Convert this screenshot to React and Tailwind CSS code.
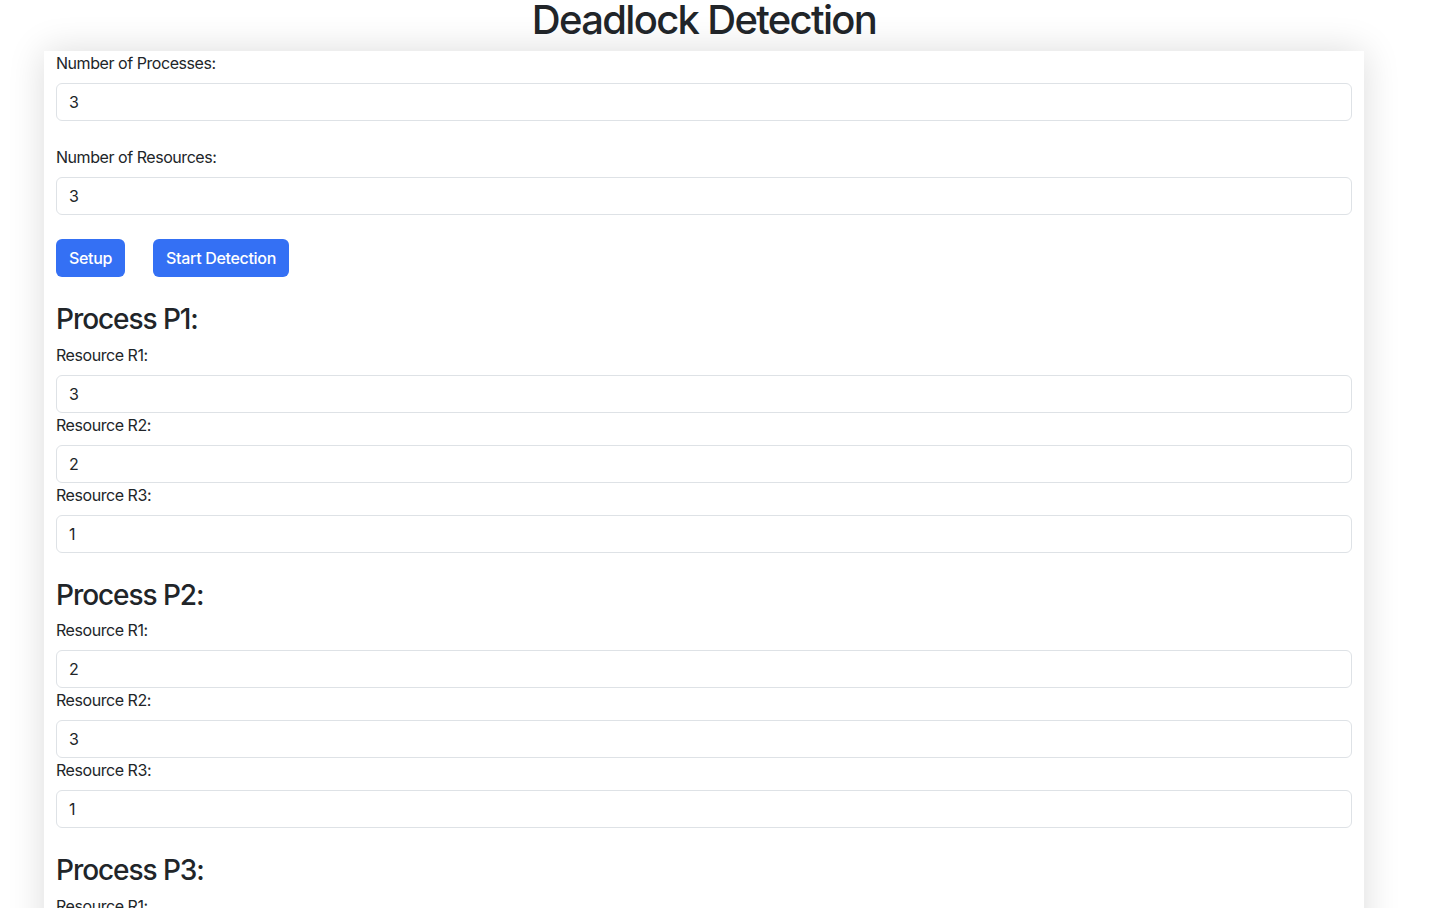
import React, { useState } from "react";

const ProcessBlock = ({ index, values, onChange }) => {
    return (
        <div className="mt-[26px]">
            <h3 className="text-[28px] leading-[1.2] font-medium tracking-[-0.038em] mb-[6px]">Process P{index + 1}:</h3>
            {values.map((v, r) => (
                <div key={r}>
                    <label className="block leading-6 mb-2">Resource R{r + 1}:</label>
                    <input
                        type="number"
                        value={v}
                        onChange={(e) => onChange(index, r, e.target.value)}
                        className="block w-full h-[38px] px-3 border border-[#dee2e6] rounded-md bg-white outline-none [appearance:textfield]"
                    />
                </div>
            ))}
        </div>
    );
};

const App = () => {
    const [processes, setProcesses] = useState("3");
    const [resources, setResources] = useState("3");
    const [matrix, setMatrix] = useState([
        ["3", "2", "1"],
        ["2", "3", "1"],
        ["1", "1", "1"],
    ]);

    const handleCell = (p, r, value) => {
        const updated = matrix.map((row) => [...row]);
        updated[p][r] = value;
        setMatrix(updated);
    };

    return (
        <div
            className="w-[1408px] bg-white text-[#212529] text-base tracking-[-0.028em]"
            style={{ fontFamily: "Inter, 'Noto Sans', sans-serif" }}
        >
            <h1 className="text-[40px] leading-none font-medium tracking-[-0.042em] text-center mb-[11px]">Deadlock Detection</h1>
            <div className="w-[1320px] mx-auto bg-white px-3 pb-6 shadow-[0_0_35px_rgba(0,0,0,0.14)]">
                <div className="mb-6">
                    <label className="block leading-6 mb-2">Number of Processes:</label>
                    <input
                        type="number"
                        value={processes}
                        onChange={(e) => setProcesses(e.target.value)}
                        className="block w-full h-[38px] px-3 border border-[#dee2e6] rounded-md outline-none [appearance:textfield]"
                    />
                </div>
                <div className="mb-6">
                    <label className="block leading-6 mb-2">Number of Resources:</label>
                    <input
                        type="number"
                        value={resources}
                        onChange={(e) => setResources(e.target.value)}
                        className="block w-full h-[38px] px-3 border border-[#dee2e6] rounded-md outline-none [appearance:textfield]"
                    />
                </div>
                <div className="flex gap-[28px]">
                    <button className="h-[38px] w-[69px] rounded-md bg-[#3470f4] text-white font-medium tracking-[-0.02em]">Setup</button>
                    <button className="h-[38px] w-[136px] rounded-md bg-[#3470f4] text-white font-medium tracking-[-0.02em]">Start Detection</button>
                </div>
                {matrix.map((row, i) => (
                    <ProcessBlock key={i} index={i} values={row} onChange={handleCell} />
                ))}
            </div>
        </div>
    );
};

export default App;
